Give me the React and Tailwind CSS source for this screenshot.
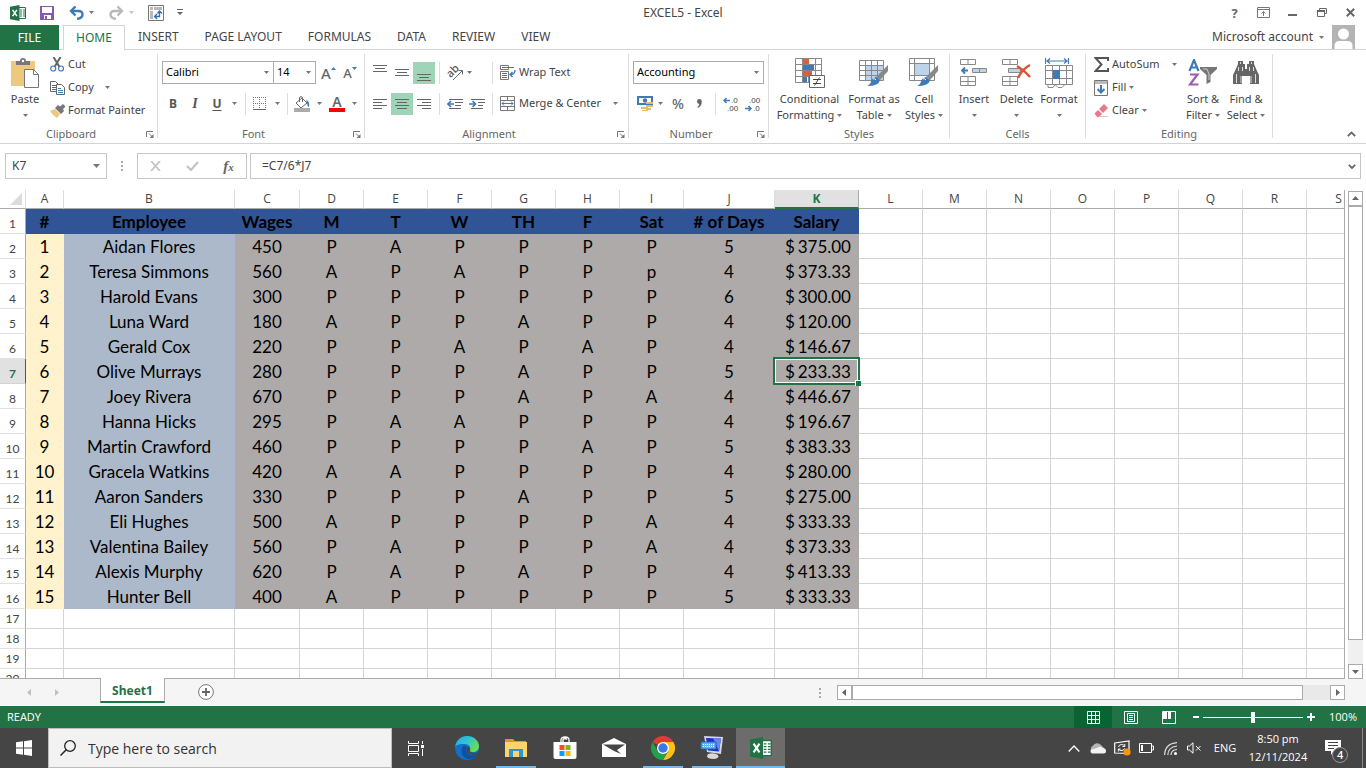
import React from 'react';

const columns = [
  ['A', 'w-[38px]'], ['B', 'w-[171px]'], ['C', 'w-[65px]'], ['D', 'w-16'], ['E', 'w-16'],
  ['F', 'w-16'], ['G', 'w-16'], ['H', 'w-16'], ['I', 'w-16'], ['J', 'w-[91px]'],
  ['K', 'w-[84px]'], ['L', 'w-16'], ['M', 'w-16'], ['N', 'w-16'], ['O', 'w-16'],
  ['P', 'w-16'], ['Q', 'w-16'], ['R', 'w-16'], ['S', 'w-16'],
];

const headings = ['#', 'Employee', 'Wages', 'M', 'T', 'W', 'TH', 'F', 'Sat', '# of Days', 'Salary'];

const employees = [
  ['Aidan Flores', 450, 'PAPPPP', 5, '375.00'],
  ['Teresa Simmons', 560, 'APAPPp', 4, '373.33'],
  ['Harold Evans', 300, 'PPPPPP', 6, '300.00'],
  ['Luna Ward', 180, 'APPAPP', 4, '120.00'],
  ['Gerald Cox', 220, 'PPAPAP', 4, '146.67'],
  ['Olive Murrays', 280, 'PPPAPP', 5, '233.33'],
  ['Joey Rivera', 670, 'PPPAPA', 4, '446.67'],
  ['Hanna Hicks', 295, 'PAAPPP', 4, '196.67'],
  ['Martin Crawford', 460, 'PPPPAP', 5, '383.33'],
  ['Gracela Watkins', 420, 'AAPPPP', 4, '280.00'],
  ['Aaron Sanders', 330, 'PPPAPP', 5, '275.00'],
  ['Eli Hughes', 500, 'APPPPA', 4, '333.33'],
  ['Valentina Bailey', 560, 'PAPPPA', 4, '373.33'],
  ['Alexis Murphy', 620, 'PAPAPP', 4, '413.33'],
  ['Hunter Bell', 400, 'APPPPP', 5, '333.33'],
];

const Svg = ({ w, h, children, className = '' }) => (
  <svg width={w} height={h} viewBox={`0 0 ${w} ${h}`} fill="none" className={`shrink-0 ${className}`} aria-hidden="true">
    {children}
  </svg>
);

const Arrow = ({ className = 'text-[#777]' }) => (
  <Svg w={5} h={3} className={className}><path d="M0 0h5L2.500 3z" fill="currentColor" /></Svg>
);

const ExcelLogo = ({ size }) => (
  <svg width={size} height={size} viewBox="0 0 16 16" className="shrink-0" aria-hidden="true">
    <path d="M8.500 2.500h7v11h-7z" fill="#fff" stroke="#217346" />
    <path d="M10 5h2M13 5h2M10 7h2M13 7h2M10 9h2M13 9h2M10 11h2M13 11h2" stroke="#217346" />
    <path d="M0 1.800L9.500 0v16L0 14.200z" fill="#217346" />
    <path d="M2.600 4.800L6.900 11.200M6.900 4.800L2.600 11.200" stroke="#fff" strokeWidth="1.500" />
  </svg>
);

/* ---------- title bar ---------- */

const TitleBar = () => (
  <header className="grid h-[25px] grid-cols-[1fr_auto_1fr] items-center">
    <div className="flex items-center pl-[10px]">
      <ExcelLogo size={16} />
      <button aria-label="Save" className="ml-[14px]">
        <Svg w={14} h={14}>
          <path d="M0 0h14v14H0z" fill="#8a57b0" />
          <path d="M2 1h10v6H2zM4 9h7v4H4z" fill="#fff" />
          <path d="M5 10h2v3H5z" fill="#8a57b0" />
        </Svg>
      </button>
      <button aria-label="Undo" className="ml-[15px]">
        <Svg w={16} h={14}>
          <path d="M2 5h7.500q4 0 4 3.500t-5.500 4.500" stroke="#3f7ab8" strokeWidth="2.400" />
          <path d="M6.500 0.500L2 5L6.500 9.500" stroke="#3f7ab8" strokeWidth="2.400" />
        </Svg>
      </button>
      <button aria-label="Undo list" className="ml-[4px]"><Arrow /></button>
      <button aria-label="Redo" className="ml-[15px]">
        <Svg w={16} h={14}>
          <path d="M13 5H5.500q-4 0-4 3.500T7 13" stroke="#b9b9b9" strokeWidth="2.400" />
          <path d="M8.500 0.500L13 5L8.500 9.500" stroke="#b9b9b9" strokeWidth="2.400" />
        </Svg>
      </button>
      <button aria-label="Redo list" className="ml-[4px]"><Arrow className="text-[#c4c4c4]" /></button>
      <button aria-label="PivotTable" className="ml-[14px]">
        <Svg w={16} h={16}>
          <path d="M.5.500h15v15H.5z" stroke="#777" />
          <path d="M2 2h3v3H2zM6 2h8v3H6zM2 6h3v8H2z" fill="#b8b8b8" />
          <path d="M7 11.500h4.500V6.500M9 9l-2.500 2.500L9 14M9.500 8.500l2-2.500l2.500 2.500" stroke="#2f6db5" strokeWidth="1.300" />
        </Svg>
      </button>
      <button aria-label="Customize toolbar" className="ml-[13px]">
        <Svg w={6} h={7}><path d="M0 0h6v1H0zM0 3h6L3 6z" fill="#666" /></Svg>
      </button>
    </div>
    <h1 className="text-[12px] text-[#444]">EXCEL5 - Excel</h1>
    <div className="flex items-center justify-end pr-[1px] text-[#666]">
      <button aria-label="Help" className="flex w-[29px] justify-center text-[13px] leading-4 font-bold">?</button>
      <button aria-label="Ribbon display options" className="flex w-[29px] justify-center">
        <Svg w={13} h={11}>
          <path d="M.5.500h12v10H.5zM.5 2.500h12" stroke="#777" />
          <path d="M6.500 9V4.500M4.500 6.500l2-2l2 2" stroke="#777" />
        </Svg>
      </button>
      <button aria-label="Minimize" className="flex w-[29px] justify-center">
        <Svg w={9} h={10}><path d="M0 6h9v2H0z" fill="#666" /></Svg>
      </button>
      <button aria-label="Restore" className="flex w-[29px] justify-center">
        <Svg w={10} h={9}><path d="M2.500 2.500v-2h7v5h-2M.5 3h7v5.500h-7z" stroke="#666" /><path d="M0 2h8v2H0z" fill="#666" /></Svg>
      </button>
      <button aria-label="Close" className="flex w-[29px] justify-center">
        <Svg w={9} h={9}><path d="M.8.800l7.400 7.400M8.200.800L.8 8.200" stroke="#666" strokeWidth="2" /></Svg>
      </button>
    </div>
  </header>
);

const MenuTabs = () => (
  <nav className="flex h-[25px] border-b border-[#d4d4d4] text-[12px] text-[#444]">
    <button className="h-[25px] w-[59px] bg-[#217346] text-white">FILE</button>
    <button className="ml-1 h-[25px] w-[62px] border border-b-0 border-[#d4d4d4] bg-white text-[#217346]">HOME</button>
    {['INSERT', 'PAGE LAYOUT', 'FORMULAS', 'DATA', 'REVIEW', 'VIEW'].map((tab) => (
      <button key={tab} className="px-[13px]">{tab}</button>
    ))}
    <button className="ml-auto flex items-center gap-[6px] pr-[8px]">
      Microsoft account <Arrow />
    </button>
    <Svg w={23} h={24} className="mr-[11px]">
      <path d="M0 0h23v24H0z" fill="#b4b4b4" />
      <circle cx="11.500" cy="9" r="5.500" fill="#fff" />
      <path d="M2.500 24v-3q0-5 5-5h8q5 0 5 5v3z" fill="#fff" />
    </Svg>
  </nav>
);

/* ---------- ribbon ---------- */

const Group = ({ title, width, launcher, children }) => (
  <>
    <section aria-label={title} className={`flex shrink-0 flex-col pt-[3px] ${width}`}>
      <div className="flex h-[72px]">{children}</div>
      <div className="flex h-[18px] items-center">
        <span className="flex-1 text-center text-[11px] text-[#666]">{title}</span>
        {launcher && (
          <button aria-label={`${title} settings`} className="w-[15px] pl-1">
            <Svg w={8} h={7}>
              <path d="M.5 6V.500H7M3 2.500l3 3" stroke="#777" />
              <path d="M7.500 3v4H3.500z" fill="#777" />
            </Svg>
          </button>
        )}
      </div>
    </section>
    <div className="mt-1 mb-[5px] w-px shrink-0 bg-[#dcdcdc]" />
  </>
);

const Rows = ({ children }) => (
  <div className="flex flex-col gap-2 pt-2 pl-1">{children}</div>
);
const Row = ({ children }) => <div className="flex h-[23px] items-center">{children}</div>;
const Rule = () => <div className="h-[22px] w-px shrink-0 bg-[#dcdcdc]" />;

const IconButton = ({ label, width = 'w-[22px]', active, children }) => (
  <button aria-label={label} className={`flex h-[22px] shrink-0 items-center justify-center ${width} ${active ? 'bg-[#9fd5b7]' : ''}`}>
    {children}
  </button>
);

const SmallButton = ({ icon, label, arrow, gap = 'gap-[5px]', iconWidth = 'w-[18px]' }) => (
  <button className="flex h-[23px] items-center whitespace-nowrap">
    <span className={`flex shrink-0 ${iconWidth}`}>{icon}</span>
    <span className={`flex items-center ${gap}`}>{label}{arrow && <Arrow />}</span>
  </button>
);

const BigButton = ({ icon, lines, width }) => (
  <button className={`flex shrink-0 flex-col items-center pt-1 leading-4 whitespace-nowrap ${width}`}>
    <span className="mb-0.5 flex h-8 items-center">{icon}</span>
    <span>{lines[0]}</span>
    <span className="flex h-4 items-center gap-[3px]">{lines[1]}<Arrow /></span>
  </button>
);

const Combo = ({ label, value, width }) => (
  <label className={`relative flex h-[23px] shrink-0 items-center ${width}`}>
    <select aria-label={label} className="h-full w-full appearance-none rounded-none border border-[#ababab] bg-white pl-[3px] text-[11px] text-black">
      <option>{value}</option>
    </select>
    <span className="pointer-events-none absolute right-[5px]"><Arrow /></span>
  </label>
);

const lineSets = {
  left: 'M0 .5h14M0 3.500h9M0 6.500h14M0 9.500h9',
  center: 'M0 .5h14M2 3.500h10M0 6.500h14M2 9.500h10',
  right: 'M0 .5h14M5 3.500h9M0 6.500h14M5 9.500h9',
};
const TextLines = ({ kind }) => (
  <Svg w={14} h={10}><path d={lineSets[kind]} stroke="#666" /></Svg>
);
const VerticalLines = ({ y }) => (
  <Svg w={14} h={20}><path d={`M0 ${y + 0.5}h14M2 ${y + 3.5}h10M0 ${y + 6.5}h14`} stroke="#666" /></Svg>
);

const PasteIcon = (
  <Svg w={30} h={30}>
    <path d="M1 3h24v25H1z" fill="#edc87e" />
    <path d="M6 3h4a3 3 0 0 1 6 0h4v4H6z" fill="#777" />
    <circle cx="13" cy="3" r="1.200" fill="#fff" />
    <path d="M14.500 11.500h9l5 5v13h-14z" fill="#fff" stroke="#777" />
    <path d="M23.500 11.500v5h5" stroke="#777" />
  </Svg>
);

const ClipboardGroup = () => (
  <Group title="Clipboard" width="w-[157px]" launcher>
    <BigButton width="w-[50px]" lines={['Paste', '']} icon={PasteIcon} />
    <div className="flex flex-col">
      <SmallButton label="Cut" icon={
        <Svg w={15} h={15}>
          <path d="M3.500 0l6 10M10.500 0l-6 10" stroke="#666" strokeWidth="2" />
          <circle cx="3.200" cy="11.500" r="2.500" stroke="#3f7ab8" strokeWidth="1.200" />
          <circle cx="11" cy="11.500" r="2.500" stroke="#3f7ab8" strokeWidth="1.200" />
        </Svg>
      } />
      <SmallButton label="Copy" arrow gap="gap-[11px]" icon={
        <Svg w={15} h={14}>
          <path d="M.5.500h5l3 3v7h-8zM2 4.500h4M2 6.500h4M2 8.500h4" stroke="#666" />
          <path d="M6.500 3.500h5l3 3v7h-8z" fill="#fff" stroke="#666" />
          <path d="M8 7.500h3M8 9.500h5M8 11.500h5" stroke="#3f7ab8" />
        </Svg>
      } />
      <SmallButton label="Format Painter" icon={
        <Svg w={16} h={14}>
          <path d="M0 7l5-2l5 5l-3 4q-4-2-7-7z" fill="#edc87e" />
          <path d="M5 4l3-3l2 1.500L13 0l2.500 2.500L13 5l1 2l-3 3z" fill="#777" />
        </Svg>
      } />
    </div>
  </Group>
);

const FontGroup = () => (
  <Group title="Font" width="w-[206px]" launcher>
    <Rows>
      <Row>
        <Combo label="Font name" value="Calibri" width="w-[112px]" />
        <div className="-ml-px"><Combo label="Font size" value="14" width="w-[43px]" /></div>
        <IconButton label="Increase font size" width="ml-0.5 w-[21px]">
          <span className="text-[15px] leading-4 font-medium text-[#666]">A</span>
          <Svg w={5} h={12}><path d="M0 3h5L2.500 0z" fill="#3f7ab8" /></Svg>
        </IconButton>
        <IconButton label="Decrease font size">
          <span className="text-[13px] leading-4 font-medium text-[#666]">A</span>
          <Svg w={5} h={12}><path d="M0 0h5L2.500 3z" fill="#3f7ab8" /></Svg>
        </IconButton>
      </Row>
      <Row>
        <IconButton label="Bold"><b className="text-[12px] text-[#555]">B</b></IconButton>
        <IconButton label="Italic"><i className="font-['Liberation_Serif',serif] text-[14px] font-bold text-[#555]">I</i></IconButton>
        <IconButton label="Underline"><b className="text-[12px] text-[#555] underline underline-offset-2">U</b></IconButton>
        <IconButton label="Underline styles" width="mr-[5px] w-3"><Arrow /></IconButton>
        <Rule />
        <IconButton label="Borders" width="w-[26px]">
          <Svg w={13} h={13}>
            <path d="M.5 0v12M6.500 0v12M12.500 0v12M0 .5h13M0 6.500h13" stroke="#777" strokeDasharray="1 1" />
            <path d="M0 12.500h13" stroke="#666" />
          </Svg>
        </IconButton>
        <IconButton label="Border styles" width="mr-[5px] w-[10px]"><Arrow /></IconButton>
        <Rule />
        <IconButton label="Fill color" width="w-7">
          <Svg w={16} h={16}>
            <path d="M2 7l6-5l5 5l-6 5z" fill="#fff" stroke="#666" />
            <path d="M5.500 6V1.500q1.500-2 3 0V6" stroke="#666" />
            <path d="M12 4q4 1 3 7q-2-1-2-4z" fill="#3f7ab8" />
            <path d="M0 12h16v4H0z" fill="#aeaaa9" />
          </Svg>
        </IconButton>
        <IconButton label="Fill color list" width="w-[7px]"><Arrow /></IconButton>
        <IconButton label="Font color" width="w-7">
          <span className="flex w-4 flex-col items-center border-b-4 border-[#f00] text-[14px] leading-3 font-semibold text-[#666]">A</span>
        </IconButton>
        <IconButton label="Font color list" width="w-[6px]"><Arrow /></IconButton>
      </Row>
    </Rows>
  </Group>
);

const AlignmentGroup = () => (
  <Group title="Alignment" width="w-[263px]" launcher>
    <Rows>
      <Row>
        <IconButton label="Top align"><VerticalLines y={2} /></IconButton>
        <IconButton label="Middle align"><VerticalLines y={6} /></IconButton>
        <IconButton label="Bottom align" active><VerticalLines y={11} /></IconButton>
        <span className="w-1" /><Rule />
        <IconButton label="Orientation" width="ml-1 w-[22px]">
          <Svg w={20} h={20} className="overflow-visible">
            <text x="3" y="13" transform="rotate(-45 7 11)" fontSize="11" fontWeight="500" fill="#555">ab</text>
            <path d="M8 17L17 8M13.500 7.500H17.500V11.500" stroke="#666" />
          </Svg>
        </IconButton>
        <IconButton label="Orientation list" width="mr-[19px] w-[7px]"><Arrow /></IconButton>
        <Rule />
        <span className="w-[7px]" />
        <SmallButton label="Wrap Text" iconWidth="w-[19px]" icon={
          <Svg w={16} h={16}>
            <path d="M.5.500h8v4h-8zM.5 6.500h8v8h-8z" stroke="#777" />
            <path d="M2 2.500h12M2 8.500h5M2 10.500h5M2 12.500h5" stroke="#3f7ab8" />
            <path d="M15 5q0 4-4 4.500M12.500 7L10 9.500l2.500 2.500" stroke="#3f7ab8" strokeWidth="1.400" />
          </Svg>
        } />
      </Row>
      <Row>
        <IconButton label="Align left"><TextLines kind="left" /></IconButton>
        <IconButton label="Center" active><TextLines kind="center" /></IconButton>
        <IconButton label="Align right"><TextLines kind="right" /></IconButton>
        <span className="w-1" /><Rule />
        <IconButton label="Decrease indent" width="ml-1 w-[22px]">
          <Svg w={16} h={10}>
            <path d="M2 .5h14M8 3.500h8M8 6.500h6M2 9.500h12" stroke="#666" />
            <path d="M7 5H1M4 2L1 5l3 3" stroke="#3f7ab8" strokeWidth="1.600" />
          </Svg>
        </IconButton>
        <IconButton label="Increase indent">
          <Svg w={16} h={10}>
            <path d="M2 .5h14M9 3.500h7M9 6.500h5M2 9.500h12" stroke="#666" />
            <path d="M0 5h6M3.500 2l3 3l-3 3" stroke="#3f7ab8" strokeWidth="1.600" />
          </Svg>
        </IconButton>
        <span className="w-1" /><Rule />
        <span className="w-[7px]" />
        <SmallButton label="Merge & Center" arrow gap="gap-[12px]" iconWidth="w-[19px]" icon={
          <Svg w={15} h={15}>
            <path d="M.5.500h14v14H.5zM.5 4.500h14M.5 10.500h14M7.500.500v4M7.500 10.500v4" stroke="#777" />
            <path d="M2 7.500h11M4 5.500l-2 2l2 2M11 5.500l2 2l-2 2" stroke="#3f7ab8" />
          </Svg>
        } />
      </Row>
    </Rows>
  </Group>
);

const Decimals = ({ more }) => (
  <Svg w={16} h={18} className="font-['Liberation_Sans',sans-serif]">
    <text x={more ? 8 : 4} y="8" fontSize="8" fill="#444">{more ? '.0' : '.00'}</text>
    <text x={more ? 4 : 8} y="16" fontSize="8" fill="#444">{more ? '.00' : '.0'}</text>
    {more
      ? <path d="M7 5.500H1M3.500 3L1 5.500L3.500 8" stroke="#3f7ab8" strokeWidth="1.500" />
      : <path d="M0 13.500h6M3.500 11L6 13.500L3.500 16" stroke="#3f7ab8" strokeWidth="1.500" />}
  </Svg>
);

const NumberGroup = () => (
  <Group title="Number" width="w-[139px]" launcher>
    <Rows>
      <Row><Combo label="Number format" value="Accounting" width="w-[131px]" /></Row>
      <Row>
        <IconButton label="Accounting format" width="w-[23px]">
          <Svg w={16} h={15}>
            <path d="M0 0h16v9H0z" fill="#3f7ab8" />
            <path d="M2 2h12v5H2z" fill="#fff" />
            <circle cx="8" cy="4.500" r="2.200" fill="#3f7ab8" />
            <path d="M9 6h7v2H9zM9 9h7v2H9zM4 11h7v2H4zM9 12h5v2H9zM5 14h6v1H5z" fill="#e9b96a" />
          </Svg>
        </IconButton>
        <IconButton label="Accounting list" width="w-[9px]"><Arrow /></IconButton>
        <IconButton label="Percent style" width="ml-0.5 w-[22px]"><span className="text-[14px] font-medium text-[#666]">%</span></IconButton>
        <IconButton label="Comma style" width="mr-[6px] w-5">
          <Svg w={5} h={9}><path d="M0 2.500a2.300 2.300 0 0 1 4.800 0Q4.800 7 1 9L.5 8Q2.500 6.500 2.300 5Q0 4.800 0 2.500z" fill="#666" /></Svg>
        </IconButton>
        <Rule />
        <IconButton label="Increase decimal" width="ml-1 w-[22px]"><Decimals more /></IconButton>
        <IconButton label="Decrease decimal"><Decimals /></IconButton>
      </Row>
    </Rows>
  </Group>
);

const Brush = () => (
  <>
    <path d="M29 7v6l-8 9l-4-3z" fill="#888" />
    <path d="M17 19l4 3q-1 6-13 6q4-2 4-5q1-3 5-4z" fill="#3f7ab8" />
    <path d="M14 21q2-1 3 1" stroke="#fff" />
  </>
);

const StylesGroup = () => (
  <Group title="Styles" width="w-[180px]">
    <BigButton width="ml-[3px] w-[75px]" lines={['Conditional', 'Formatting']} icon={
      <Svg w={30} h={30}>
        <path d="M.5.500h26v24H.5zM.5 6.500h26M.5 12.500h26M.5 18.500h26M7.500.500v24M20.500.500v24M13.500.500v24" stroke="#888" />
        <path d="M8 1h6v5H8zM8 13h9v5H8z" fill="#d9603c" />
        <path d="M8 7h11v5H8zM8 19h4v5H8z" fill="#3f7ab8" />
        <path d="M14.500 17.500h15v12h-15z" fill="#fff" stroke="#666" />
        <path d="M18 21.500h8M18 25.500h8M24.500 19.500l-5 8" stroke="#444" />
      </Svg>
    } />
    <BigButton width="w-[54px]" lines={['Format as', 'Table']} icon={
      <Svg w={30} h={30}>
        <path d="M7 8h17v15H7z" fill="#bdd3ea" />
        <path d="M.5 2.500h24v20H.5zM.5 7.500h24M.5 12.500h24M.5 17.500h24M6.500 2.500v20M12.500 2.500v20M18.500 2.500v20" stroke="#888" />
        <Brush />
      </Svg>
    } />
    <BigButton width="w-[46px]" lines={['Cell', 'Styles']} icon={
      <Svg w={30} h={30}>
        <path d="M6 6h15v11H6z" fill="#bdd3ea" />
        <path d="M.5.500h25v22H.5zM.5 5.500h25M.5 17.500h25M5.500.500v22M20.500.500v22" stroke="#888" />
        <Brush />
      </Svg>
    } />
  </Group>
);

const CellsGroup = () => (
  <Group title="Cells" width="w-[135px]">
    <BigButton width="ml-[3px] w-[42px]" lines={['Insert', '']} icon={
      <Svg w={28} h={28}>
        <path d="M.5.500h15v5H.5zM8 .5v5M.5 17.500h15v9H.5zM8 17.500v9M.5 22.500h15" stroke="#888" />
        <path d="M12.500 9.500h14v4h-14z" fill="#bdd3ea" stroke="#888" />
        <path d="M19.500 9.500v4" stroke="#888" />
        <path d="M8 11.500H2M5 8.500l-3 3l3 3" stroke="#3f7ab8" strokeWidth="1.800" />
      </Svg>
    } />
    <BigButton width="w-[43px]" lines={['Delete', '']} icon={
      <Svg w={30} h={28}>
        <path d="M.5.500h15v5H.5zM8 .5v5M.5 17.500h15v9H.5zM8 17.500v9M.5 22.500h15" stroke="#888" />
        <path d="M6.500 9.500h12v4h-12z" fill="#bdd3ea" stroke="#888" />
        <path d="M15 7q7 4 13 11M28 6q-8 4-12 13" stroke="#d9532c" strokeWidth="2.400" />
      </Svg>
    } />
    <BigButton width="w-[42px]" lines={['Format', '']} icon={
      <Svg w={28} h={31}>
        <path d="M.5 0v6M23.500 0v6M2 3h20M5 .5L2 3l3 2.500M19 .5L22 3l-3 2.500" stroke="#3f7ab8" strokeWidth="1.200" />
        <path d="M.5 7.500h27v19H.5zM.5 12.500h27M.5 20.500h27M7.500 7.500v19M14.500 7.500v19M21.500 7.500v19M3 27v2.500h5l2-3l3 3h4l3-3" stroke="#888" />
        <path d="M8 12h7v9H8z" fill="#3f7ab8" />
      </Svg>
    } />
  </Group>
);

const EditingGroup = () => (
  <Group title="Editing" width="w-[186px]">
    <div className="flex w-[96px] flex-col pl-2">
      <SmallButton label="AutoSum" arrow gap="gap-[12px]" icon={
        <Svg w={15} h={15}><path d="M14 4V1H1.500l6 6.500l-6 6.500H14v-3" stroke="#555" strokeWidth="2" /></Svg>
      } />
      <SmallButton label="Fill" arrow gap="gap-[3px]" icon={
        <Svg w={14} h={16}>
          <path d="M.5.500h13v15H.5z" stroke="#777" />
          <path d="M1 1h12v3H1z" fill="#bbb" />
          <path d="M7 5v8M3.500 9L7 12.500L10.500 9" stroke="#3f7ab8" strokeWidth="2" />
        </Svg>
      } />
      <SmallButton label="Clear" arrow gap="gap-[3px]" icon={
        <Svg w={15} h={14}>
          <path d="M5 5L10 0l4 4l-5 5z" fill="#e8798d" />
          <path d="M4 6l4 4l-3 3H3L.5 9.500z" fill="#e8798d" />
          <path d="M6 12.500h8" stroke="#ccc" />
        </Svg>
      } />
    </div>
    <BigButton width="w-[42px]" lines={['Sort &', 'Filter']} icon={
      <Svg w={30} h={28}>
        <path d="M1.500 12L6 1l4.500 11M3 8.500h6" stroke="#3f7ab8" strokeWidth="2.200" />
        <path d="M2 15.500h7.500L2 25.500h8.500" stroke="#9a5fb5" strokeWidth="2.200" />
        <path d="M12 8h17v2l-6.500 6v7l-4 2v-9L12 10z" fill="#777" />
        <path d="M15 10h4l2 5v6" stroke="#ccc" />
      </Svg>
    } />
    <BigButton width="w-[44px]" lines={['Find &', 'Select']} icon={
      <Svg w={28} h={26}>
        <path d="M6 1h5v3h2v5h2V4h2V1h5v3l3 7l2 4v9h-9v-8h-8v8H1v-9l2-4l3-7z" fill="#666" />
        <path d="M8.500 2v2M19.500 2v2M6.500 7v4M10.500 7v4M17.500 7v4M21.500 7v4M4.500 14v9M23.500 14v9M9 16v7M19 16v7" stroke="#ddd" />
      </Svg>
    } />
  </Group>
);

const Ribbon = () => (
  <div className="flex h-[94px] shrink-0 border-b border-[#d4d4d4] text-[11px] text-[#444]">
    <ClipboardGroup />
    <FontGroup />
    <AlignmentGroup />
    <NumberGroup />
    <StylesGroup />
    <CellsGroup />
    <EditingGroup />
    <button aria-label="Collapse the ribbon" className="mt-auto mr-[10px] mb-[6px] ml-auto">
      <Svg w={9} h={6}><path d="M.8 5.200L4.500 1.500l3.700 3.700" stroke="#666" strokeWidth="1.800" /></Svg>
    </button>
  </div>
);

/* ---------- formula bar ---------- */

const FormulaBar = () => (
  <div className="flex shrink-0 items-center pt-[9px] pr-[5px] pb-[11px] pl-[5px] text-[12px] text-[#444]">
    <div className="flex h-[26px] w-[102px] items-center border border-[#c6c6c6] pr-[6px]">
      <input aria-label="Name box" defaultValue="K7" className="w-0 flex-1 pl-[6px] outline-none" />
      <button aria-label="Names"><Svg w={7} h={4}><path d="M0 0h7L3.500 4z" fill="#777" /></Svg></button>
    </div>
    <div className="flex w-[30px] justify-center">
      <Svg w={2} h={10}><path d="M0 0h2v2H0zM0 4h2v2H0zM0 8h2v2H0z" fill="#aaa" /></Svg>
    </div>
    <div className="flex h-[26px] w-[110px] items-center justify-around border border-[#c6c6c6]">
      <button aria-label="Cancel"><Svg w={11} h={10}><path d="M1 0l9 10M10 0L1 10" stroke="#c4c4c4" strokeWidth="1.800" /></Svg></button>
      <button aria-label="Enter"><Svg w={13} h={10}><path d="M1 5l4 4l7-8" stroke="#c4c4c4" strokeWidth="2.200" /></Svg></button>
      <button aria-label="Insert function" className="font-['Liberation_Serif',serif] text-[15px] leading-4 font-bold text-[#666] italic">
        f<span className="text-[11px]">x</span>
      </button>
    </div>
    <div className="ml-[3px] flex h-[26px] flex-1 items-center border border-[#c6c6c6] pr-1">
      <input aria-label="Formula" defaultValue="=C7/6*J7" className="flex-1 pl-[11px] outline-none" />
      <button aria-label="Expand formula bar"><Svg w={8} h={5}><path d="M.8.800L4 4L7.200.800" stroke="#666" strokeWidth="1.800" /></Svg></button>
    </div>
  </div>
);

/* ---------- sheet ---------- */

const fillFor = (col) => {
  if (col === 0) return 'bg-[#fff2cc] border-[#fff2cc]';
  if (col === 1) return 'bg-[#acb9ca] border-[#acb9ca]';
  return 'bg-[#aeaaaa] border-[#aeaaaa]';
};

const SelectionBox = () => (
  <div className="pointer-events-none absolute -inset-0.5 z-10 border-2 border-[#217346]">
    <div className="h-full border border-white" />
    <div className="absolute -right-[3px] -bottom-[3px] size-[6px] border-t border-l border-white bg-[#217346]" />
  </div>
);

const RowHeader = ({ n, active }) => (
  <th scope="row" className={`border-r border-b px-0 pb-0 text-[12px] leading-4 ${n <= 16 ? 'pt-[5px]' : 'pt-0'} ${active ? 'border-r-[#217346] border-b-[#d4d4d4] bg-[#e1e1e1] font-bold text-[#217346]' : 'border-r-[#ababab] border-b-[#e1e1e1] font-normal text-[#444]'}`}>
    {n}
  </th>
);

const EmptyCells = ({ from }) => columns.slice(from).map(([name]) => (
  <td key={name} className="border-r border-b border-[#d4d4d4] p-0" />
));

const EmployeeRow = ({ index, data }) => {
  const [name, wages, days, total, salary] = data;
  const rowNumber = index + 2;
  const values = [index + 1, name, wages, ...days, total];
  return (
    <tr className="h-[25px]">
      <RowHeader n={rowNumber} active={rowNumber === 7} />
      {values.map((value, col) => (
        <td key={col} className={`border-r border-b px-0 pt-0.5 pb-0 text-center ${fillFor(col)}`}>{value}</td>
      ))}
      <td className={`relative border-r border-b pt-0.5 pr-[7px] pb-0 pl-[10px] ${fillFor(10)}`}>
        <span className="flex justify-between"><span>$</span><span>{salary}</span></span>
        {rowNumber === 7 && <SelectionBox />}
      </td>
      <EmptyCells from={11} />
    </tr>
  );
};

const Sheet = () => (
  <div className="min-w-0 flex-1 overflow-hidden border-r border-b border-[#ababab]">
    <table className="w-[1371px] table-fixed border-separate border-spacing-0 font-['Lato','Open_Sans',sans-serif] text-[17px] leading-[22px] text-black [font-variant-ligatures:none]">
      <colgroup>
        <col className="w-[26px]" />
        {columns.map(([name, width]) => <col key={name} className={width} />)}
      </colgroup>
      <thead>
        <tr className="h-[19px] font-['Open_Sans','Noto_Sans',sans-serif] text-[12px] leading-4 text-[#444]">
          <th className="border-r border-b border-r-[#dcdcdc] border-b-[#ababab] p-0">
            <Svg w={12} h={12} className="ml-auto mr-[3px]"><path d="M12 0v12H0z" fill="#dcdcdc" /></Svg>
          </th>
          {columns.map(([name]) => (
            <th
              key={name}
              scope="col"
              className={`p-0 ${name === 'K' ? 'border-r border-b-2 border-r-[#ababab] border-b-[#217346] bg-[#e1e1e1] font-bold text-[#217346]' : 'border-r border-b border-r-[#dcdcdc] border-b-[#ababab] font-normal'}`}
            >
              {name}
            </th>
          ))}
        </tr>
      </thead>
      <tbody>
        <tr className="h-[25px]">
          <RowHeader n={1} />
          {headings.map((text) => (
            <td key={text} className="border-r border-b border-[#305496] bg-[#305496] px-0 pt-0.5 pb-0 text-center font-bold">{text}</td>
          ))}
          <EmptyCells from={11} />
        </tr>
        {employees.map((data, index) => <EmployeeRow key={index} index={index} data={data} />)}
        {[17, 18, 19, 20].map((n) => (
          <tr key={n} className="h-5">
            <RowHeader n={n} />
            <EmptyCells from={0} />
          </tr>
        ))}
      </tbody>
    </table>
  </div>
);

const ScrollButton = ({ label, d }) => (
  <button aria-label={label} className="flex size-[15px] shrink-0 items-center justify-center border border-[#ababab] bg-white">
    <Svg w={7} h={7}><path d={d} fill="#666" /></Svg>
  </button>
);

const VerticalScroll = () => (
  <div className="flex w-[21px] shrink-0 flex-col items-center pt-px">
    <ScrollButton label="Scroll up" d="M0 5h7L3.500 1z" />
    <div className="flex w-[15px] flex-1 flex-col bg-[#f0f0f0]">
      <div className="mb-[24px] flex-1 border border-[#ababab] bg-white" />
    </div>
    <ScrollButton label="Scroll down" d="M0 2h7L3.500 6z" />
  </div>
);

const SheetTabs = () => (
  <div className="flex h-[27px] shrink-0 items-start bg-[#f5f5f5]">
    <div className="flex h-[26px] w-[100px] items-center gap-[24px] pl-[27px]">
      <button aria-label="Previous sheet"><Svg w={4} h={7}><path d="M4 0v7L0 3.500z" fill="#c0c0c0" /></Svg></button>
      <button aria-label="Next sheet"><Svg w={4} h={7}><path d="M0 0v7L4 3.500z" fill="#c0c0c0" /></Svg></button>
    </div>
    <button className="-mt-px h-[25px] w-[65px] border-r border-b-2 border-l border-r-[#ababab] border-b-[#217346] border-l-[#ababab] bg-white pt-[3px] text-[12px] leading-4 font-bold text-[#217346]">Sheet1</button>
    <button aria-label="New sheet" className="mt-[5px] ml-[33px]">
      <Svg w={16} h={16}><circle cx="8" cy="8" r="7.400" fill="#fff" stroke="#777" /><path d="M8 4v8M4 8h8" stroke="#666" strokeWidth="1.800" /></Svg>
    </button>
    <div className="mt-[6px] mr-[21px] ml-auto flex w-[38.5%] items-center">
      <Svg w={2} h={10} className="mr-4"><path d="M0 0h2v2H0zM0 4h2v2H0zM0 8h2v2H0z" fill="#aaa" /></Svg>
      <ScrollButton label="Scroll left" d="M5 0v7L1 3.500z" />
      <div className="flex h-[15px] flex-1 bg-[#e9e9e9]">
        <div className="mr-[27px] flex-1 border border-[#ababab] bg-white" />
      </div>
      <ScrollButton label="Scroll right" d="M2 0v7l4-3.500z" />
    </div>
  </div>
);

const StatusBar = () => (
  <footer className="flex h-[22px] shrink-0 items-center bg-[#217346] pr-[9px] pl-[7px] font-['Open_Sans','Noto_Sans',sans-serif] text-[11px] text-white">
    <span>READY</span>
    <button aria-label="Normal view" className="ml-auto flex h-[22px] w-[38px] items-center justify-center bg-[#0a6332]">
      <Svg w={13} h={13}><path d="M.5.500h12v12H.5zM4.500.500v12M8.500.500v12M.5 4.500h12M.5 8.500h12" stroke="#fff" /></Svg>
    </button>
    <button aria-label="Page layout view" className="flex w-[38px] justify-center">
      <Svg w={14} h={13}><path d="M.5.500h13v12H.5zM3.500 2.500h7v8h-7zM5 4.500h4M5 6.500h4M5 8.500h4" stroke="#fff" /></Svg>
    </button>
    <button aria-label="Page break preview" className="flex w-[38px] justify-center">
      <Svg w={14} h={13}><path d="M.5.500h13v12H.5z" stroke="#fff" /><path d="M1 1h4v7H1zM6 1h3v7H6z" fill="#fff" /></Svg>
    </button>
    <button aria-label="Zoom out" className="ml-[5px]"><Svg w={6} h={2}><path d="M0 0h6v2H0z" fill="#fff" /></Svg></button>
    <input
      type="range"
      aria-label="Zoom"
      defaultValue="50"
      className="mx-1 h-px w-[100px] appearance-none bg-white [&::-webkit-slider-thumb]:h-[11px] [&::-webkit-slider-thumb]:w-1 [&::-webkit-slider-thumb]:appearance-none [&::-webkit-slider-thumb]:bg-white"
    />
    <button aria-label="Zoom in"><Svg w={8} h={8}><path d="M0 3h8v2H0zM3 0h2v8H3z" fill="#fff" /></Svg></button>
    <button className="ml-[14px] w-[28px] text-right">100%</button>
  </footer>
);

/* ---------- taskbar ---------- */

const EdgeIcon = (
  <svg width="24" height="24" viewBox="0 0 24 24" aria-hidden="true">
    <defs>
      <linearGradient id="edgeTop" x1="0" y1="0" x2="1" y2="0.600">
        <stop offset="0" stopColor="#2aa5e0" /><stop offset=".5" stopColor="#2fc4d4" /><stop offset="1" stopColor="#6ae04a" />
      </linearGradient>
    </defs>
    <circle cx="12" cy="12" r="12" fill="#0f6fc9" />
    <path d="M.3 10.500C1 4.500 6 0 12 0c7 0 12 5 12 10c0 4-3 6-6 6c-2.500 0-4-1-3.500-2c1.500-1.500 1-6-5-6c-4 0-7.500.500-9.200 2.500z" fill="url(#edgeTop)" />
    <path d="M9 9.500c-4 3-3.500 11 3.500 13.500c4 .5 8-2 9.500-5c-3 1.500-7 1.500-9-.5c-2.500-2-2.500-4.500-1-6.500q-1-1.500-3-1.500z" fill="#124f9c" />
    <path d="M11.500 12q1-2 3 0q1.500 1.500 0 3q1 2.500 7 1.800l2.500-1.300q1 2-1.500 2.500q-5 1.500-8.500-.5q-3-2-2.500-5.500z" fill="#454545" />
  </svg>
);

const FolderIcon = (
  <Svg w={22} h={18}>
    <path d="M0 0h8l2 2h11v5H0z" fill="#dc9b12" />
    <path d="M0 3h22v15H0z" fill="#fbd567" />
    <path d="M4 10h14v8h-4v-4H8v4H4z" fill="#2f93dd" />
    <path d="M8 12h6v2H8z" fill="#fbd567" />
  </Svg>
);

const StoreIcon = (
  <Svg w={24} h={24}>
    <path d="M8 7V4q0-3 4-3t4 3v3M10 6V3.500q2-2 4 0" stroke="#fff" strokeWidth="1.300" />
    <path d="M.5 6h23v15q0 2-2 2h-19q-2 0-2-2z" fill="#fff" />
    <path d="M6.500 9h5v5h-5z" fill="#f25022" /><path d="M12.500 9h5v5h-5z" fill="#7fba00" />
    <path d="M6.500 15h5v5h-5z" fill="#00a4ef" /><path d="M12.500 15h5v5h-5z" fill="#ffb900" />
  </Svg>
);

const MailIcon = (
  <Svg w={24} h={20}>
    <path d="M0 6L12 0l12 6v13H0z" fill="#fff" />
    <path d="M1 6.500h22L15 12l4 4l-7-3z" fill="#454545" />
  </Svg>
);

const ChromeIcon = (
  <Svg w={24} h={24}>
    <path d="M12 12L1.600 6A12 12 0 0 1 22.400 6z" fill="#e33b2e" />
    <path d="M12 12V6h10.400A12 12 0 0 1 12 24l5.200-9z" fill="#fbc116" />
    <path d="M12 12l5.200 3L12 24A12 12 0 0 1 1.600 6l5.200 9z" fill="#22a04a" />
    <circle cx="12" cy="12" r="6" fill="#fff" /><circle cx="12" cy="12" r="4.700" fill="#3b78e7" />
  </Svg>
);

const KeyboardIcon = (
  <Svg w={24} h={24}>
    <path d="M4 0l19 1l-2 17l-14-2z" fill="#d5d8de" />
    <path d="M6 2l15 .5l-2 13l-11-1z" fill="#1c2fc8" />
    <path d="M13 2l8 .5l-2 13z" fill="#6b83ee" />
    <path d="M8 18q6-2 10 1q2 3-4 4q-7 0-7-3z" fill="#d9d9d9" />
    <path d="M1 6h15v7H1z" fill="#5fb4ee" stroke="#2465a8" />
    <path d="M3 8.500h11M3 10.500h11" stroke="#fff" strokeDasharray="1 1" />
  </Svg>
);

const TaskButton = ({ label, running, active, children }) => (
  <button aria-label={label} className={`relative flex h-10 w-[49px] shrink-0 items-center justify-center ${active ? 'bg-[#6c6c6b]' : ''}`}>
    {children}
    {running && <span className={`absolute bottom-0 h-0.5 bg-[#76b9ed] ${active ? 'w-full' : 'w-10'}`} />}
  </button>
);

const TrayIcon = ({ label, children }) => (
  <button aria-label={label} className="flex w-6 justify-center">{children}</button>
);

const Taskbar = () => (
  <div className="flex h-10 shrink-0 items-center bg-[#454545] font-['Open_Sans','Noto_Sans',sans-serif] text-white">
    <button aria-label="Start" className="flex w-12 justify-center">
      <Svg w={16} h={16}><path d="M0 2.300L7 1.300v6.200H0zM8 1.200L16 0v7.500H8zM0 8.500h7v6.200l-7-1zM8 8.500h8V16l-8-1.200z" fill="#fff" /></Svg>
    </button>
    <label className="flex h-10 w-[344px] items-center border border-[#bdbdbd] bg-[#f2f2f2] pl-[11px]">
      <Svg w={16} h={16}><circle cx="10" cy="6" r="5.300" stroke="#222" strokeWidth="1.300" /><path d="M6.200 9.800L.5 15.500" stroke="#222" strokeWidth="1.500" /></Svg>
      <input aria-label="Search" placeholder="Type here to search" className="ml-3 w-0 flex-1 text-[14px] text-[#333] outline-none placeholder:text-[#333]" />
    </label>
    <button aria-label="Task view" className="mr-0.5 flex w-12 justify-center">
      <Svg w={16} h={15}>
        <path d="M.5 0v2.500h10V0M.5 4.500h10v6H.5zM.5 15v-2.500h10V15M14.500 0v3M14.500 8v7" stroke="#fff" />
        <path d="M13 4h3v3h-3z" fill="#fff" />
      </Svg>
    </button>
    <TaskButton label="Edge">{EdgeIcon}</TaskButton>
    <TaskButton label="File Explorer" running>{FolderIcon}</TaskButton>
    <TaskButton label="Store">{StoreIcon}</TaskButton>
    <TaskButton label="Mail">{MailIcon}</TaskButton>
    <TaskButton label="Chrome" running>{ChromeIcon}</TaskButton>
    <TaskButton label="On-screen keyboard" running>{KeyboardIcon}</TaskButton>
    <TaskButton label="Excel" running active><ExcelLogo size={22} /></TaskButton>
    <div className="ml-auto flex h-10 items-center text-[11px]">
      <TrayIcon label="Hidden icons"><Svg w={12} h={7}><path d="M.7 6.500L6 1l5.300 5.500" stroke="#fff" strokeWidth="1.300" /></Svg></TrayIcon>
      <TrayIcon label="OneDrive">
        <Svg w={16} h={11}>
          <path d="M4 10a4 4 0 0 1-1-7.500a5 5 0 0 1 8-.5l3 3v5z" fill="#b5b5b5" />
          <path d="M2 10.500q-2-1-1.500-3T4 6l5-2q2-1 3.500 1q3.500 0 3.500 3q0 2.500-2.500 2.500z" fill="#f2f2f2" />
        </Svg>
      </TrayIcon>
      <TrayIcon label="Updates">
        <Svg w={17} h={16}>
          <path d="M.7 3L15 1v12.500L.7 13z" stroke="#fff" strokeWidth="1.200" />
          <path d="M4.500 7q.5-2.500 3-2.500q2 0 3 1.500M10.800 4v2.500H8.500M10.500 8.500q-1 2.500-3.500 2T4.500 9M4.300 11.500V9H6.500" stroke="#fff" />
          <circle cx="13" cy="12" r="3.600" fill="#ff9800" />
        </Svg>
      </TrayIcon>
      <TrayIcon label="Battery">
        <Svg w={15} h={10}><path d="M.5.500h12v9H.5zM13 3h1.500v4H13" stroke="#fff" /><path d="M2 2h2v6H2z" fill="#fff" /></Svg>
      </TrayIcon>
      <TrayIcon label="Network">
        <Svg w={13} h={13}>
          <path d="M.6 13Q1 1.500 13 .6M3.800 13Q4 5 13 4M7 13q0-5 6-5.500" stroke="#ddd" strokeWidth="1.200" />
          <circle cx="11.500" cy="11.500" r="1.500" fill="#fff" />
        </Svg>
      </TrayIcon>
      <TrayIcon label="Volume">
        <Svg w={15} h={12}><path d="M.5 4h2L6 .8v10.400L2.500 8h-2zM9 4l4.500 4.500M13.500 4L9 8.500" stroke="#fff" /></Svg>
      </TrayIcon>
      <button className="w-[38px] text-center">ENG</button>
      <button className="w-[68px] text-center leading-[18px]">8:50 pm<br />12/11/2024</button>
      <button aria-label="Notifications" className="relative flex w-[50px] justify-center">
        <Svg w={24} h={30}>
          <path d="M0 7h16v11H9l-3 4v-4H0z" fill="#fff" />
          <path d="M3 9.500h10M3 12.500h10M3 15.500h6" stroke="#454545" />
          <circle cx="15" cy="22" r="7.500" fill="#454545" stroke="#999" />
        </Svg>
        <span className="absolute top-[14px] left-[25px] text-[11px] leading-4 font-semibold">4</span>
      </button>
      <div className="h-full w-1 border-l border-[#8a8a8a]" />
    </div>
  </div>
);

const App = () => (
  <div className="flex h-screen flex-col overflow-hidden bg-white font-['Noto_Sans','Open_Sans',sans-serif]">
    <TitleBar />
    <MenuTabs />
    <Ribbon />
    <FormulaBar />
    <main className="flex min-h-0 flex-1">
      <Sheet />
      <VerticalScroll />
    </main>
    <SheetTabs />
    <StatusBar />
    <Taskbar />
  </div>
);

export default App;
